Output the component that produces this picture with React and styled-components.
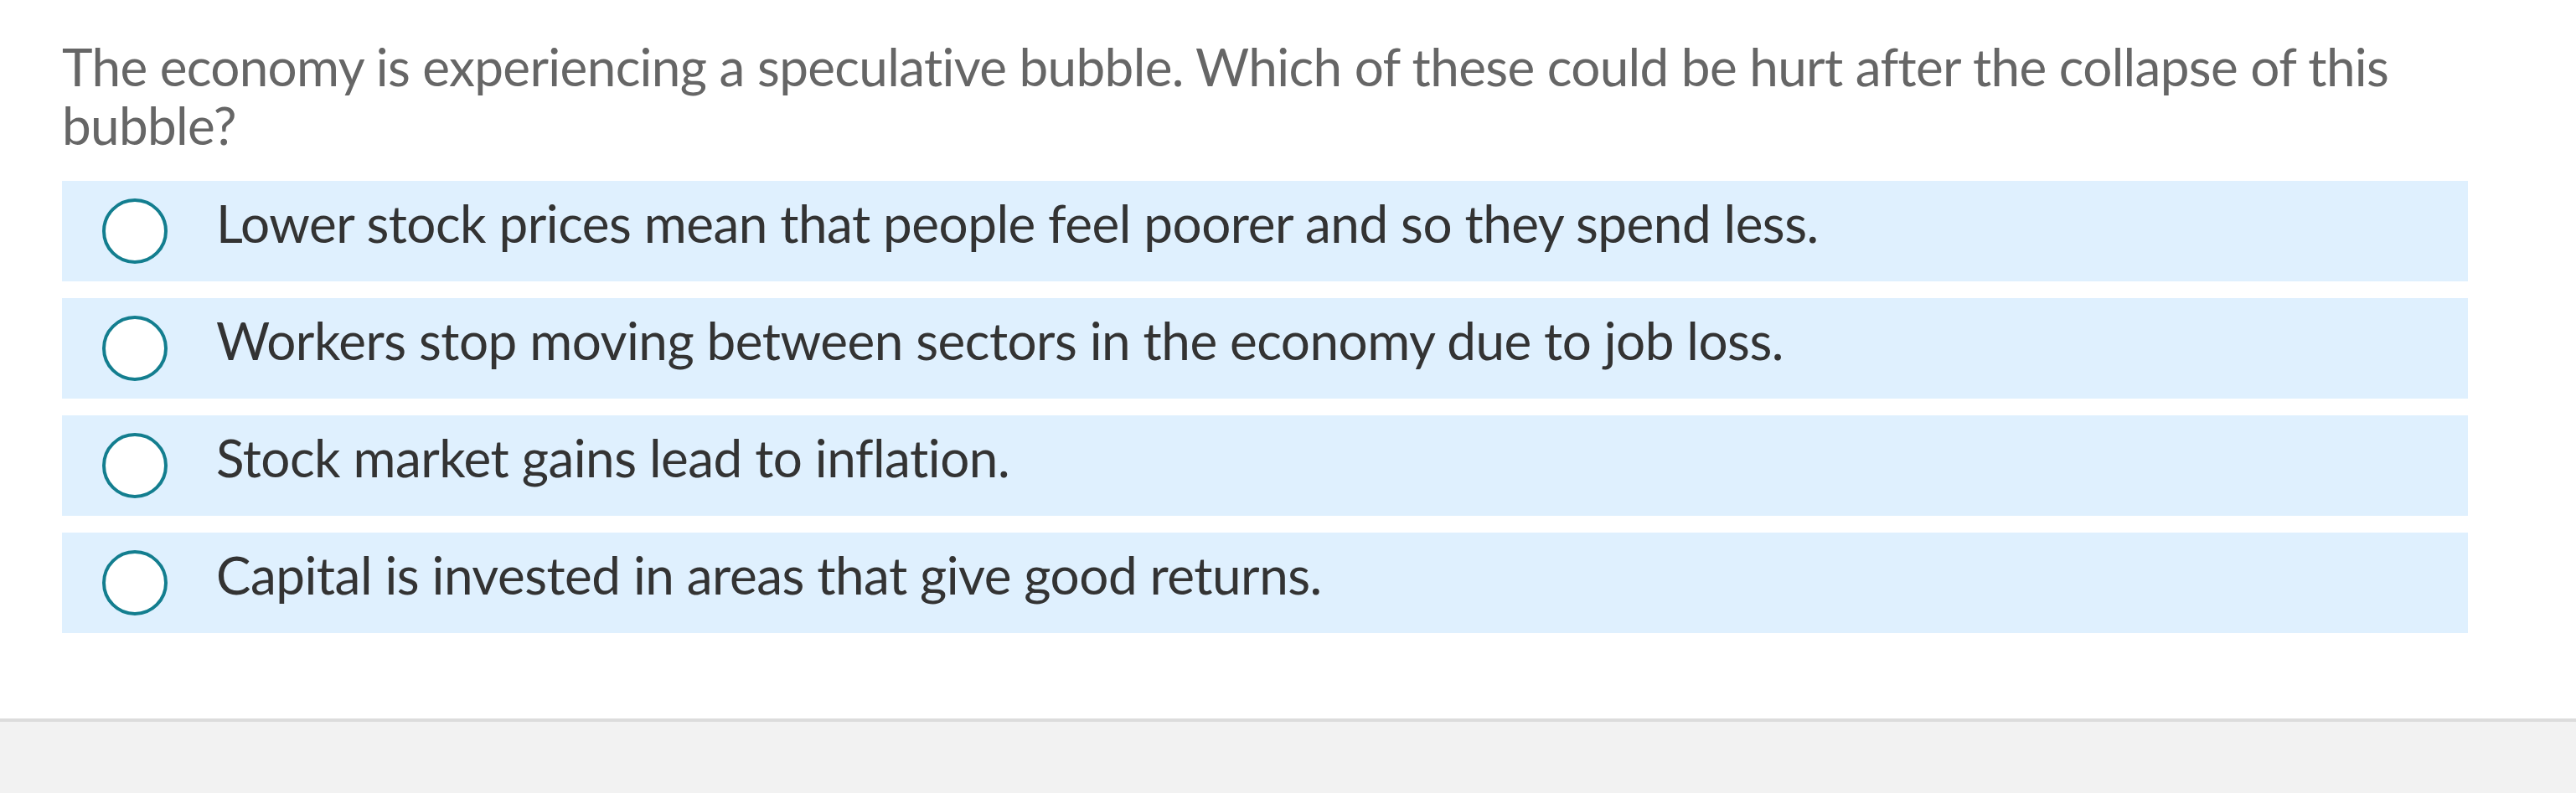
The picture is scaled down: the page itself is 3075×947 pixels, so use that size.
import React from "react";
import styled, { createGlobalStyle } from "styled-components";

const GlobalStyle = createGlobalStyle`
  html, body {
    margin: 0;
    padding: 0;
    background: #f2f2f2;
  }
  body {
    font-family: Lato, "Noto Sans", sans-serif;
  }
`;

const Page = styled.div`
  min-height: 100vh;
  display: flex;
  flex-direction: column;
`;

const Main = styled.main`
  background: #ffffff;
  padding: 44px 129px 0 74px;
  height: 858px;
  box-sizing: border-box;
`;

const Question = styled.h2`
  margin: 0 0 32px 0;
  font-size: 62px;
  line-height: 70px;
  font-weight: 400;
  letter-spacing: -0.65px;
  color: #666666;
`;

const Options = styled.ul`
  list-style: none;
  margin: 0;
  padding: 0;
  display: flex;
  flex-direction: column;
  gap: 20px;
`;

const Option = styled.li`
  height: 120px;
  background: #dff0fe;
  display: flex;
  align-items: center;
  padding-left: 48px;
  cursor: pointer;
`;

const Radio = styled.span`
  width: 78px;
  height: 78px;
  box-sizing: border-box;
  border-radius: 50%;
  border: 4px solid #137e8f;
  background: #ffffff;
  flex-shrink: 0;
`;

const Label = styled.span`
  margin-left: 58px;
  padding-bottom: 20px;
  font-size: 62px;
  line-height: 70px;
  letter-spacing: -0.5px;
  color: #333333;
`;

const Footer = styled.footer`
  flex: 1;
  border-top: 4px solid #dcdcdc;
  background: #f2f2f2;
`;

const answers = [
  "Lower stock prices mean that people feel poorer and so they spend less.",
  "Workers stop moving between sectors in the economy due to job loss.",
  "Stock market gains lead to inflation.",
  "Capital is invested in areas that give good returns.",
];

export default function App() {
  return (
    <Page>
      <GlobalStyle />
      <Main>
        <Question>
          The economy is experiencing a speculative bubble. Which of these could
          be hurt after the collapse of this bubble?
        </Question>
        <Options>
          {answers.map((a) => (
            <Option key={a}>
              <Radio />
              <Label>{a}</Label>
            </Option>
          ))}
        </Options>
      </Main>
      <Footer />
    </Page>
  );
}
